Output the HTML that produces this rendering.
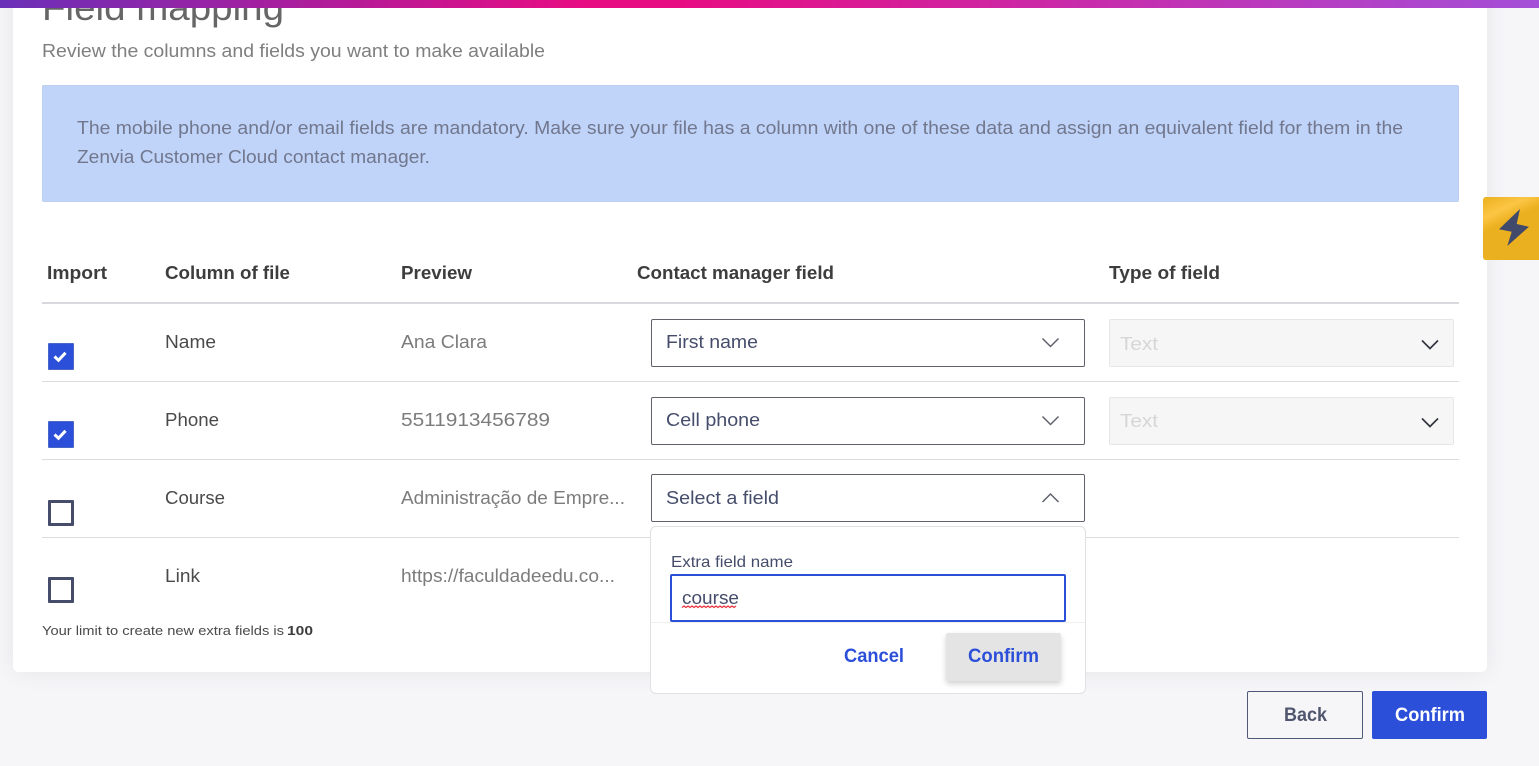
<!DOCTYPE html>
<html lang="en">
<head>
<meta charset="utf-8">
<title>Field mapping</title>
<style>
html,body{margin:0;padding:0;width:1539px;height:766px;overflow:hidden;background:#f6f6f9}
body{position:relative;font-family:"Liberation Sans",sans-serif}
div{position:absolute;box-sizing:border-box}
#card{left:13px;top:-20px;width:1474px;height:692px;background:#fff;border-radius:6px;box-shadow:0 0 24px rgba(0,0,0,.07)}
#bar{left:0;top:0;width:1539px;height:8px;background:linear-gradient(90deg,#6a30b8 0%,#e80c82 38%,#e80c82 44%,#a44fd8 100%);z-index:5}
#info{left:42px;top:85px;width:1417px;height:117px;background:#c0d3f9;border:1px solid #bccfef;border-radius:2px}
.ln{left:42px;width:1417px;height:1px;background:#dcdcdc}
.cb{left:48px;width:26px;height:27px;border-radius:1px}
.on{background:#2b4fd9;border:1px solid #4a66c8}
.off{background:#fff;border:3px solid #454d6b;height:26px}
.sel{left:651px;width:434px;height:48px;background:#fff;border:1px solid #5f626b;border-radius:2px}
.typ{left:1109px;width:345px;height:48px;background:#f6f6f6;border:1px solid #e6e6e6;border-radius:2px}
#pop{left:650px;top:526px;width:436px;height:168px;background:#fff;border:1px solid #e0e0e2;border-radius:6px}
#inp{left:670px;top:574px;width:396px;height:48px;background:#fff;border:2px solid #2b4fd9;border-radius:2px}
#div{left:651px;top:622px;width:434px;height:1px;background:#efefef}
#cg{left:946px;top:633px;width:115px;height:48px;background:#e4e4e4;border-radius:2px;box-shadow:0 3px 6px rgba(0,0,0,.18)}
#back{left:1247px;top:691px;width:116px;height:48px;border:1px solid #50587a;border-radius:2px}
#conf{left:1372px;top:691px;width:115px;height:48px;background:#2b4fd9;border-radius:2px}
#bolt{left:1483px;top:197px;width:56px;height:63px;border-radius:3px 0 0 3px;background:linear-gradient(155deg,#ebb01f 0%,#fcc544 24%,#ebb01f 40%,#ebb01f 100%)}
svg{position:absolute;left:0;top:0;z-index:3}
text{font-family:"Liberation Sans",sans-serif}
</style>
</head>
<body>
<div id="card"></div>
<div id="bar"></div>
<div id="info"></div>
<div class="ln" style="top:302px;height:2px;background:#d8d8de"></div>
<div class="ln" style="top:381px"></div>
<div class="ln" style="top:459px"></div>
<div class="ln" style="top:537px"></div>
<div class="cb on" style="top:343px"></div>
<div class="cb on" style="top:421px"></div>
<div class="cb off" style="top:500px"></div>
<div class="cb off" style="top:577px"></div>
<div class="sel" style="top:319px"></div>
<div class="sel" style="top:397px"></div>
<div class="sel" style="top:474px"></div>
<div class="typ" style="top:319px"></div>
<div class="typ" style="top:397px"></div>
<div id="pop"></div>
<div id="inp"></div>
<div id="div"></div>
<div id="cg"></div>
<div id="back"></div>
<div id="conf"></div>
<div id="bolt"></div>
<svg width="1539" height="766" viewBox="0 0 1539 766" xmlns="http://www.w3.org/2000/svg">
<text x="42" y="20" font-size="36" fill="#666" textLength="242" lengthAdjust="spacingAndGlyphs">Field mapping</text>
<text x="42" y="57" font-size="18" fill="#7f7f7f" textLength="503" lengthAdjust="spacingAndGlyphs">Review the columns and fields you want to make available</text>
<text x="77" y="134" font-size="18" fill="#71778d" textLength="1326" lengthAdjust="spacingAndGlyphs">The mobile phone and/or email fields are mandatory. Make sure your file has a column with one of these data and assign an equivalent field for them in the</text>
<text x="77" y="163" font-size="18" fill="#71778d" textLength="353" lengthAdjust="spacingAndGlyphs">Zenvia Customer Cloud contact manager.</text>

<g font-size="18" font-weight="bold" fill="#3d3d3d">
<text x="47" y="279" textLength="60" lengthAdjust="spacingAndGlyphs">Import</text>
<text x="165" y="279" textLength="125" lengthAdjust="spacingAndGlyphs">Column of file</text>
<text x="401" y="279" textLength="71" lengthAdjust="spacingAndGlyphs">Preview</text>
<text x="637" y="279" textLength="197" lengthAdjust="spacingAndGlyphs">Contact manager field</text>
<text x="1109" y="279" textLength="111" lengthAdjust="spacingAndGlyphs">Type of field</text>
</g>

<g font-size="18" fill="#4a4a4a">
<text x="165" y="348" textLength="51" lengthAdjust="spacingAndGlyphs">Name</text>
<text x="165" y="426" textLength="54" lengthAdjust="spacingAndGlyphs">Phone</text>
<text x="165" y="504" textLength="60" lengthAdjust="spacingAndGlyphs">Course</text>
<text x="165" y="582" textLength="35" lengthAdjust="spacingAndGlyphs">Link</text>
</g>
<g font-size="18" fill="#7c7c7c">
<text x="401" y="348" textLength="86" lengthAdjust="spacingAndGlyphs">Ana Clara</text>
<text x="401" y="426" textLength="149" lengthAdjust="spacingAndGlyphs">5511913456789</text>
<text x="401" y="504" textLength="224" lengthAdjust="spacingAndGlyphs">Administração de Empre...</text>
<text x="401" y="582" textLength="214" lengthAdjust="spacingAndGlyphs">https://faculdadeedu.co...</text>
</g>
<g font-size="18" fill="#454d6b">
<text x="666" y="348" textLength="92" lengthAdjust="spacingAndGlyphs">First name</text>
<text x="666" y="426" textLength="94" lengthAdjust="spacingAndGlyphs">Cell phone</text>
<text x="666" y="504" textLength="113" lengthAdjust="spacingAndGlyphs">Select a field</text>
</g>
<g font-size="18" fill="#d6d6d6">
<text x="1120" y="350" textLength="38" lengthAdjust="spacingAndGlyphs">Text</text>
<text x="1120" y="427" textLength="38" lengthAdjust="spacingAndGlyphs">Text</text>
</g>

<text x="42" y="635" font-size="13" fill="#4a4a4a" textLength="242" lengthAdjust="spacingAndGlyphs">Your limit to create new extra fields is</text>
<text x="287" y="635" font-size="13" font-weight="bold" fill="#3d3d3d" textLength="26" lengthAdjust="spacingAndGlyphs">100</text>

<text x="671" y="567" font-size="16" fill="#454d6b" textLength="122" lengthAdjust="spacingAndGlyphs">Extra field name</text>
<text x="682" y="604" font-size="18" fill="#454d6b" textLength="57" lengthAdjust="spacingAndGlyphs">course</text>
<path d="M682 607.500l2-1.500 2 1.500 2-1.500 2 1.500 2-1.500 2 1.500 2-1.500 2 1.500 2-1.500 2 1.500 2-1.500 2 1.500 2-1.500 2 1.500 2-1.500 2 1.500 2-1.500 2 1.500 2-1.500 2 1.500 2-1.500 2 1.500 2-1.500 2 1.500 2-1.500 2 1.500 2-1.500" fill="none" stroke="#e8303a" stroke-width="1.200"/>

<text x="844" y="662" font-size="19" font-weight="bold" fill="#2b4fd9" textLength="60" lengthAdjust="spacingAndGlyphs">Cancel</text>
<text x="968" y="662" font-size="19" font-weight="bold" fill="#2b4fd9" textLength="71" lengthAdjust="spacingAndGlyphs">Confirm</text>
<text x="1284" y="721" font-size="19" font-weight="bold" fill="#50566e" textLength="43" lengthAdjust="spacingAndGlyphs">Back</text>
<text x="1395" y="721" font-size="19" font-weight="bold" fill="#fff" textLength="70" lengthAdjust="spacingAndGlyphs">Confirm</text>

<g fill="none" stroke="#fff" stroke-width="3">
<path d="M54.500 356.500l4 3.800 7-7.500"/>
<path d="M54.500 434.500l4 3.800 7-7.500"/>
</g>
<g fill="none" stroke="#5f626b" stroke-width="1.500">
<path d="M1042.500 338.500l8 8 8-8"/>
<path d="M1042.500 416.500l8 8 8-8"/>
<path d="M1042.500 502l8-8 8 8"/>
</g>
<g fill="none" stroke="#33363f" stroke-width="1.700">
<path d="M1422 340.500l8 8 8-8"/>
<path d="M1422 418.500l8 8 8-8"/>
</g>
<path d="M1520 209L1516.700 224L1529 226.700L1507.300 246L1511.700 231.700L1499 229.300Z" fill="#414a6b"/>
</svg>
</body>
</html>
